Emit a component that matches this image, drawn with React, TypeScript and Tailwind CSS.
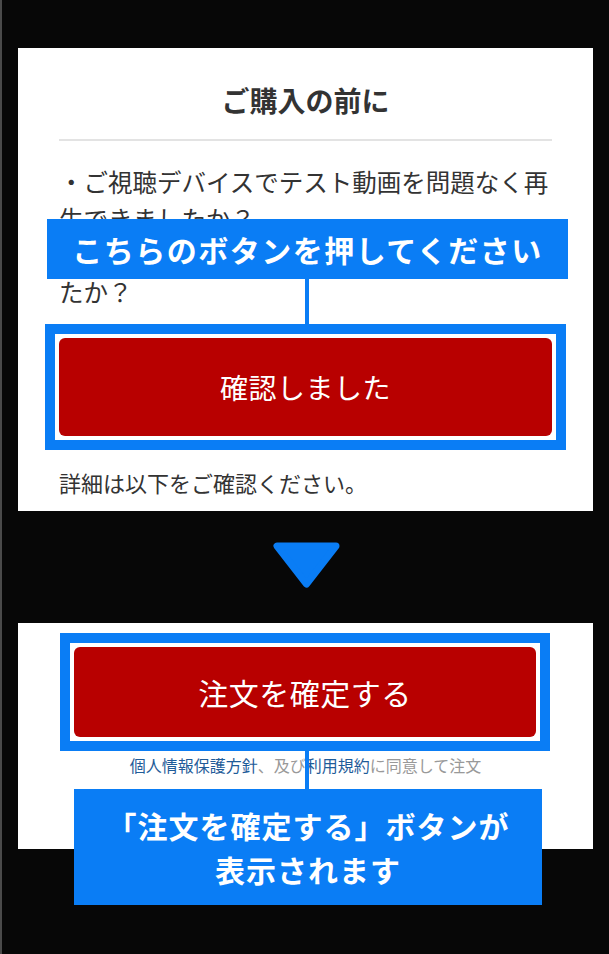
import React from "react";

const font = { fontFamily: '"Noto Sans CJK JP", "Noto Sans", sans-serif' };

export default function App() {
  return (
    <div
      className="w-[609px] h-[954px] bg-[#070707] border-l-2 border-[#4a4a4a] overflow-hidden pt-[48px]"
      style={font}
    >
      {/* Card 1 */}
      <div className="relative ml-[16px] w-[575px] bg-white px-[41px] pt-[32px] pb-[12px]">
        <h2 className="text-center text-[28px] leading-[40px] font-bold text-[#333]">
          ご購入の前に
        </h2>
        <div className="mt-[19px] h-[2px] bg-[#e3e3e3]" />
        <p className="mt-[23px] text-[24.5px] leading-[36.75px] text-[#333] whitespace-nowrap">
          ・ご視聴デバイスでテスト動画を問題なく再
          <br />
          生できましたか？
          <br />
          ・テスト動画の音声を問題なく再生できまし
          <br />
          たか？
        </p>
        <div className="mt-[13px] -mx-[14px] border-[10px] border-[#0a7df5] bg-white p-[4px]">
          <div className="h-[98px] rounded-[6px] bg-[#b80000] flex items-center justify-center text-white text-[28px] tracking-[0.5px]">
            確認しました
          </div>
        </div>
        <p className="mt-[16px] text-[22px] leading-[33px] text-[#333]">
          詳細は以下をご確認ください。
        </p>

        {/* overlay banner 1 */}
        <div className="absolute left-[29px] top-[171px] w-[521px] h-[60px] bg-[#0a7df5] flex items-center justify-center text-white font-bold text-[30px] tracking-[1.5px]">
          こちらのボタンを押してください
        </div>
        <div className="absolute left-[287px] top-[231px] w-[4px] h-[45px] bg-[#0a7df5]" />
      </div>

      {/* Arrow */}
      <div className="mt-[31px] flex justify-center pl-[1px]">
        <svg width="67" height="46" viewBox="0 0 67 46">
          <polygon
            points="4,4 63,4 33.5,42"
            fill="#0a7df5"
            stroke="#0a7df5"
            strokeWidth="7"
            strokeLinejoin="round"
          />
        </svg>
      </div>

      {/* Card 2 */}
      <div className="relative mt-[35px] ml-[16px] w-[575px] h-[226px] bg-white pt-[10px]">
        <div className="ml-[42px] w-[490px] border-[10px] border-[#0a7df5] bg-white p-[4px]">
          <div className="h-[90px] rounded-[6px] bg-[#b80000] flex items-center justify-center text-white text-[30px] tracking-[0.5px]">
            注文を確定する
          </div>
        </div>
        <p className="mt-[2px] text-center text-[16px] leading-[24px] text-[#999]">
          <span className="text-[#1f5c99]">個人情報保護方針</span>、及び
          <span className="text-[#1f5c99]">利用規約</span>に同意して注文
        </p>

        {/* overlay banner 2 */}
        <div className="absolute left-[287px] top-[128px] w-[4px] h-[38px] bg-[#0a7df5]" />
        <div className="absolute left-[56px] top-[166px] w-[468px] h-[116px] bg-[#0a7df5] flex flex-col items-center justify-center text-white font-bold text-[30px] leading-[44px] tracking-[1px]">
          <span>「注文を確定する」ボタンが</span>
          <span>表示されます</span>
        </div>
      </div>
    </div>
  );
}
